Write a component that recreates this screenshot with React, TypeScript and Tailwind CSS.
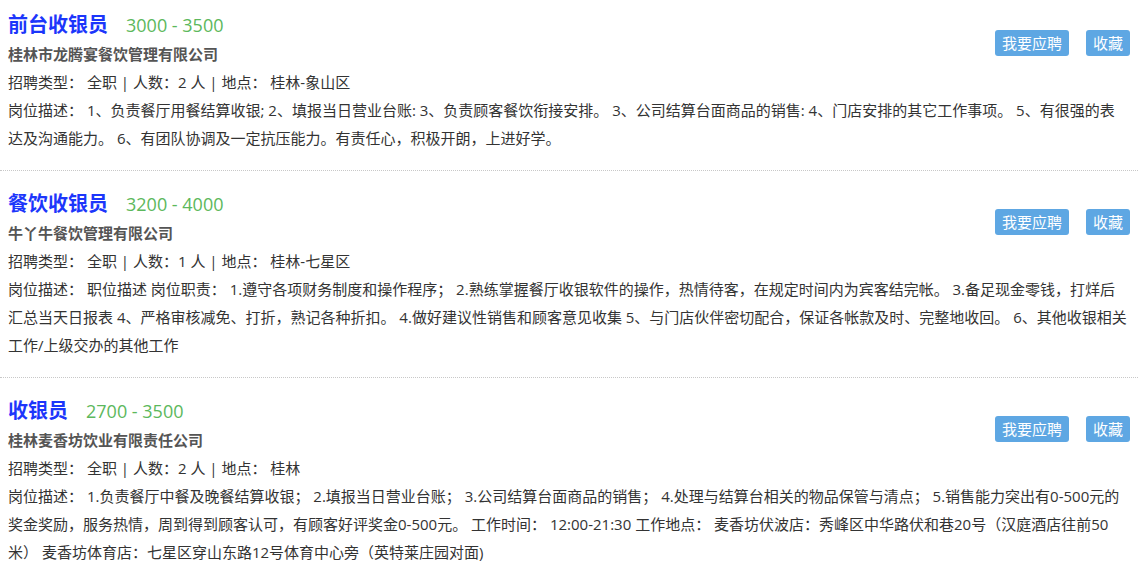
import React from "react";

type Job = {
  title: string;
  salary: string;
  company: string;
  count: number;
  place: string;
  desc: string;
};

const jobs: Job[] = [
  {
    title: "前台收银员",
    salary: "3000 - 3500",
    company: "桂林市龙腾宴餐饮管理有限公司",
    count: 2,
    place: "桂林-象山区",
    desc: "1、负责餐厅用餐结算收银; 2、填报当日营业台账: 3、负责顾客餐饮衔接安排。 3、公司结算台面商品的销售: 4、门店安排的其它工作事项。 5、有很强的表达及沟通能力。 6、有团队协调及一定抗压能力。有责任心，积极开朗，上进好学。",
  },
  {
    title: "餐饮收银员",
    salary: "3200 - 4000",
    company: "牛丫牛餐饮管理有限公司",
    count: 1,
    place: "桂林-七星区",
    desc: "职位描述 岗位职责： 1.遵守各项财务制度和操作程序； 2.熟练掌握餐厅收银软件的操作，热情待客，在规定时间内为宾客结完帐。 3.备足现金零钱，打烊后汇总当天日报表 4、严格审核减免、打折，熟记各种折扣。 4.做好建议性销售和顾客意见收集 5、与门店伙伴密切配合，保证各帐款及时、完整地收回。 6、其他收银相关工作/上级交办的其他工作",
  },
  {
    title: "收银员",
    salary: "2700 - 3500",
    company: "桂林麦香坊饮业有限责任公司",
    count: 2,
    place: "桂林",
    desc: "1.负责餐厅中餐及晚餐结算收银； 2.填报当日营业台账； 3.公司结算台面商品的销售； 4.处理与结算台相关的物品保管与清点； 5.销售能力突出有0-500元的奖金奖励，服务热情，周到得到顾客认可，有顾客好评奖金0-500元。 工作时间： 12:00-21:30 工作地点： 麦香坊伏波店：秀峰区中华路伏和巷20号（汉庭酒店往前50米） 麦香坊体育店：七星区穿山东路12号体育中心旁（英特莱庄园对面)",
  },
];

const JobCard = ({ job }: { job: Job }) => (
  <div className="pl-2 pr-[10px] pt-[18px] pb-[18px] border-b border-dotted border-[#c8c8c8]">
    {/* actions */}
    <div className="float-right mt-[20px] mr-[-2px] flex gap-[17px]">
      <button className="h-[26px] px-[7px] rounded-[3px] bg-[#5ea7e3] text-white text-[15px] leading-[26px]">
        我要应聘
      </button>
      <button className="h-[26px] px-[7px] rounded-[3px] bg-[#5ea7e3] text-white text-[15px] leading-[26px]">
        收藏
      </button>
    </div>

    <div className="flex items-center h-[30px]">
      <span className="text-[20px] font-bold text-[#1c36fb]">{job.title}</span>
      <span className="ml-[18px] text-[18px] text-[#5cb85c]">{job.salary}</span>
    </div>
    <div className="text-[15px] font-bold text-[#555] leading-[28px]">
      {job.company}
    </div>
    <div className="text-[15px] text-[#333] leading-[28px]">
      招聘类型： 全职 | 人数：{job.count} 人 | 地点： {job.place}
    </div>
    <div className="text-[15px] text-[#333] leading-[28px]">
      岗位描述： {job.desc}
    </div>
  </div>
);

export default function App() {
  return (
    <div className="w-[1138px] h-[563px] overflow-hidden bg-white font-['Segoe_UI','Open_Sans','Noto_Sans_CJK_SC',sans-serif]">
      <div className="-mt-[8px]">
        {jobs.map((job) => (
          <JobCard key={job.title} job={job} />
        ))}
      </div>
    </div>
  );
}
